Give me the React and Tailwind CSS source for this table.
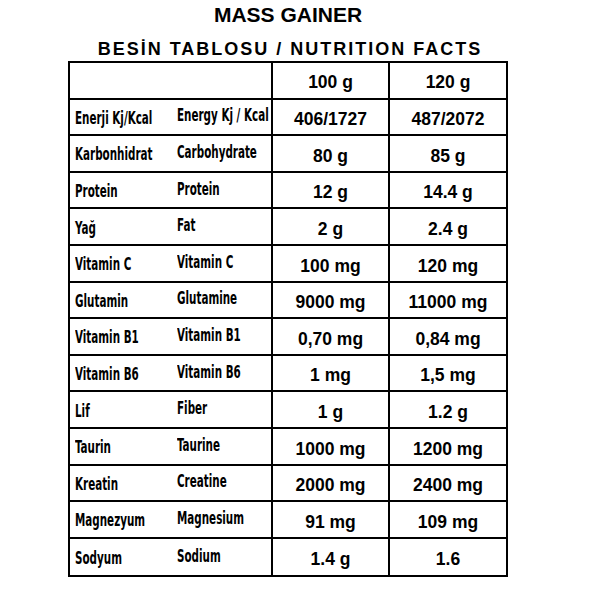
import React from 'react'

const rows = [
  ['Enerji Kj/Kcal', 'Energy Kj / Kcal', '406/1727', '487/2072'],
  ['Karbonhidrat', 'Carbohydrate', '80 g', '85 g'],
  ['Protein', 'Protein', '12 g', '14.4 g'],
  ['Yağ', 'Fat', '2 g', '2.4 g'],
  ['Vitamin C', 'Vitamin C', '100 mg', '120 mg'],
  ['Glutamin', 'Glutamine', '9000 mg', '11000 mg'],
  ['Vitamin B1', 'Vitamin B1', '0,70 mg', '0,84 mg'],
  ['Vitamin B6', 'Vitamin B6', '1 mg', '1,5 mg'],
  ['Lif', 'Fiber', '1 g', '1.2 g'],
  ['Taurin', 'Taurine', '1000 mg', '1200 mg'],
  ['Kreatin', 'Creatine', '2000 mg', '2400 mg'],
  ['Magnezyum', 'Magnesium', '91 mg', '109 mg'],
  ['Sodyum', 'Sodium', '1.4 g', '1.6'],
]

const narrow = { fontFamily: '"DejaVu Sans Condensed", "DejaVu Sans", sans-serif' }
const arial = { fontFamily: '"Liberation Sans", Arial, sans-serif' }

function Label({ text }) {
  return (
    <span className="inline-block origin-left scale-x-[0.64] whitespace-nowrap text-[18px] font-bold leading-none text-black" style={narrow}>
      {text}
    </span>
  )
}

export default function App() {
  return (
    <div className="w-[592px] h-[592px] bg-white" style={arial}>
      <div className="pt-[4px] text-center text-[21px] font-bold leading-[22px] text-black pr-[16px]">MASS GAINER</div>
      <div className="mt-[14px] text-center text-[18px] font-bold leading-[18px] tracking-[2px] text-black pr-[12px]">
        BESİN TABLOSU / NUTRITION FACTS
      </div>
      <div className="ml-[68px] mt-[3px] w-[440px] border-2 border-black">
        <div className="grid h-[36.6px] grid-cols-[201px_117px_118px] border-b-2 border-black">
          <div />
          <div className="flex items-center justify-center border-l-2 border-black pt-[3px] text-[17.5px] font-bold">100 g</div>
          <div className="flex items-center justify-center border-l-2 border-black pt-[3px] text-[17.5px] font-bold">120 g</div>
        </div>
        {rows.map((r, i) => (
          <div
            key={i}
            className={`grid h-[36.6px] grid-cols-[201px_117px_118px] ${i < rows.length - 1 ? 'border-b-2 border-black' : ''}`}
          >
            <div className="flex items-center overflow-hidden pl-[5px]">
              <div className="w-[102px] shrink-0 pt-[4px]"><Label text={r[0]} /></div>
              <div className="shrink-0 pb-[1px]"><Label text={r[1]} /></div>
            </div>
            <div className="flex items-center justify-center border-l-2 border-black pt-[5px] text-[17.5px] font-bold">{r[2]}</div>
            <div className="flex items-center justify-center border-l-2 border-black pt-[5px] text-[17.5px] font-bold">{r[3]}</div>
          </div>
        ))}
      </div>
    </div>
  )
}
